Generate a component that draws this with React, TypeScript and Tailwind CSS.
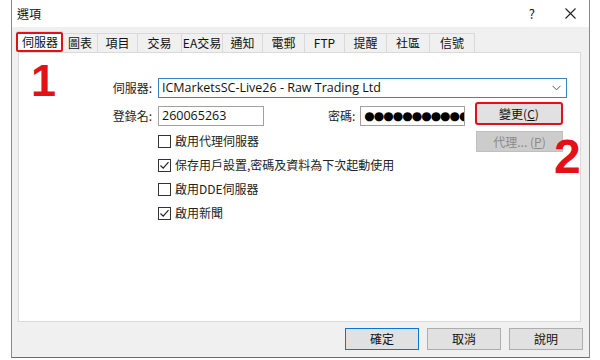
import React from "react";

const font = { fontFamily: '"Noto Sans CJK TC", "Noto Sans", sans-serif' };

const tabs: [string, number][] = [
  ["伺服器", 46],
  ["圖表", 35],
  ["項目", 40],
  ["交易", 44],
  ["EA交易", 41],
  ["通知", 40],
  ["電郵", 42],
  ["FTP", 40],
  ["提醒", 42],
  ["社區", 43],
  ["信號", 45],
];

function Check({ checked, label }: { checked: boolean; label: string }) {
  return (
    <div className="flex h-[24px] items-center">
      <div className="flex h-[13px] w-[13px] shrink-0 items-center justify-center border border-[#333] bg-white">
        {checked && (
          <svg width="11" height="11" viewBox="0 0 11 11">
            <path d="M1.5 5.5 L4.2 8.2 L9.5 2.2" fill="none" stroke="#222" strokeWidth="1.2" />
          </svg>
        )}
      </div>
      <span className="ml-[4px] whitespace-nowrap text-[12px] leading-none text-[#222]">{label}</span>
    </div>
  );
}

export default function App() {
  return (
    <div className="h-[360px] w-[600px] overflow-hidden bg-white" style={font}>
      <div className="ml-[11px] flex h-[358px] w-[579px] flex-col border-x border-b border-x-[#8a8a8a] border-b-[#6e6e6e] bg-[#f0f0f0]">
        {/* title bar */}
        <div className="flex h-[27px] items-center bg-white pl-[5px] pr-[13px] text-[12px] text-[#111]">
          <span>選項</span>
          <span className="ml-auto mr-[30px] text-[13px]">?</span>
          <svg width="11" height="11" viewBox="0 0 11 11">
            <path d="M0.5 0.5 L10.5 10.5 M10.5 0.5 L0.5 10.5" stroke="#222" strokeWidth="1.1" />
          </svg>
        </div>

        {/* body */}
        <div className="flex flex-1 flex-col pl-[6px] pr-[8px]">
          {/* tabs */}
          <div className="relative z-10 ml-[-1px] mt-[4px] flex h-[21px] items-end">
            {tabs.map(([t, w], i) =>
              i === 0 ? (
                <div
                  key={t}
                  className="relative flex h-[21px] items-center justify-center border border-b-0 border-[#d9d9d9] bg-white text-[12px] text-[#111]"
                  style={{ width: w }}
                >
                  {t}
                  <div className="absolute left-[-2px] right-[-1px] top-[0px] bottom-[0px] rounded-[2px] border-2 border-[#e3101a]" />
                </div>
              ) : (
                <div
                  key={t}
                  className="flex h-[19px] items-center justify-center border border-b-0 border-l-0 border-[#d9d9d9] bg-[#f0f0f0] text-[12px] text-[#111]"
                  style={{ width: w }}
                >
                  {t}
                </div>
              )
            )}
          </div>

          {/* panel */}
          <div className="relative h-[270px] border border-[#d9d9d9] bg-white">
            <div className="pl-[72px] pt-[25px]">
              {/* server row */}
              <div className="flex h-[20px] items-center">
                <span className="w-[61px] shrink-0 whitespace-nowrap text-right text-[12px] text-[#222]">伺服器:</span>
                <div className="ml-[6px] flex h-[20px] w-[409px] shrink-0 items-center border border-[#3c83c6] bg-white pl-[3px] pr-[5px]">
                  <span
                    className="whitespace-nowrap text-[12.5px] text-[#111]"
                    style={{ fontFamily: '"Open Sans", "Noto Sans", sans-serif' }}
                  >
                    ICMarketsSC-Live26 - Raw Trading Ltd
                  </span>
                  <svg className="ml-auto" width="9" height="6" viewBox="0 0 9 6">
                    <path d="M0.5 0.8 L4.5 4.8 L8.5 0.8" fill="none" stroke="#555" strokeWidth="1" />
                  </svg>
                </div>
              </div>

              <div className="mt-[5px] flex">
                <div className="w-[376px] shrink-0">
                  <div className="mt-[3px] flex h-[20px] items-center">
                    <span className="w-[61px] shrink-0 whitespace-nowrap text-right text-[12px] text-[#222]">登錄名:</span>
                    <div className="ml-[6px] flex h-[20px] w-[106px] shrink-0 items-center border border-[#a0a0a0] bg-white pl-[3px]">
                      <span
                        className="text-[12.5px] text-[#111]"
                        style={{ fontFamily: '"Open Sans", "Noto Sans", sans-serif' }}
                      >
                        260065263
                      </span>
                    </div>
                    <span className="ml-[64px] shrink-0 whitespace-nowrap text-[12px] text-[#222]">密碼:</span>
                    <div className="ml-[5px] flex h-[20px] w-[105px] shrink-0 items-center overflow-hidden border border-[#a0a0a0] bg-white pl-[3px]">
                      <span
                        className="whitespace-nowrap text-[12px] leading-none tracking-[-1px] text-black"
                        style={{ fontFamily: '"DejaVu Sans", sans-serif' }}
                      >
                        ●●●●●●●●●●●
                      </span>
                    </div>
                  </div>
                  <div className="ml-[67px] mt-[3px] flex flex-col">
                    <Check checked={false} label="啟用代理伺服器" />
                    <Check checked={true} label="保存用戶設置,密碼及資料為下次起動使用" />
                    <Check checked={false} label="啟用DDE伺服器" />
                    <Check checked={true} label="啟用新聞" />
                  </div>
                </div>
                <div className="ml-[9px] flex flex-col">
                  <div className="relative flex h-[21px] w-[86px] items-center justify-center whitespace-nowrap border border-[#adadad] bg-[#e1e1e1] text-[12px] text-[#111]">
                    變更(<span className="underline">C</span>)
                    <div className="absolute left-[-2px] right-[-2px] top-[-2px] bottom-[-2px] rounded-[3px] border-2 border-[#e3101a]" />
                  </div>
                  <div className="mt-[7px] flex h-[21px] w-[87px] items-center justify-center whitespace-nowrap border border-[#bfbfbf] bg-[#cccccc] text-[12px] text-[#8a8a8a]">
                    代理... (<span className="underline">P</span>)
                  </div>
                </div>
              </div>
            </div>

            {/* annotations */}
            <div
              className="absolute left-[12px] top-[5px] text-[45px] font-bold leading-none text-[#e3101a]"
              style={{ fontFamily: '"Liberation Sans Narrow", "Liberation Sans", sans-serif' }}
            >
              1
            </div>
            <div
              className="absolute left-[535px] top-[80px] text-[48px] font-bold leading-none text-[#e3101a]"
              style={{ fontFamily: '"Liberation Sans Narrow", "Liberation Sans", sans-serif' }}
            >
              2
            </div>
          </div>

          {/* bottom buttons */}
          <div className="mr-[-2px] mt-[6px] flex justify-end gap-[8px]">
            <div className="flex h-[22px] w-[74px] items-center justify-center border border-[#0078d7] bg-[#e1e1e1] text-[12px] text-[#111]">
              確定
            </div>
            <div className="flex h-[22px] w-[74px] items-center justify-center border border-[#adadad] bg-[#e1e1e1] text-[12px] text-[#111]">
              取消
            </div>
            <div className="flex h-[22px] w-[74px] items-center justify-center border border-[#adadad] bg-[#e1e1e1] text-[12px] text-[#111]">
              說明
            </div>
          </div>
        </div>
      </div>
    </div>
  );
}
